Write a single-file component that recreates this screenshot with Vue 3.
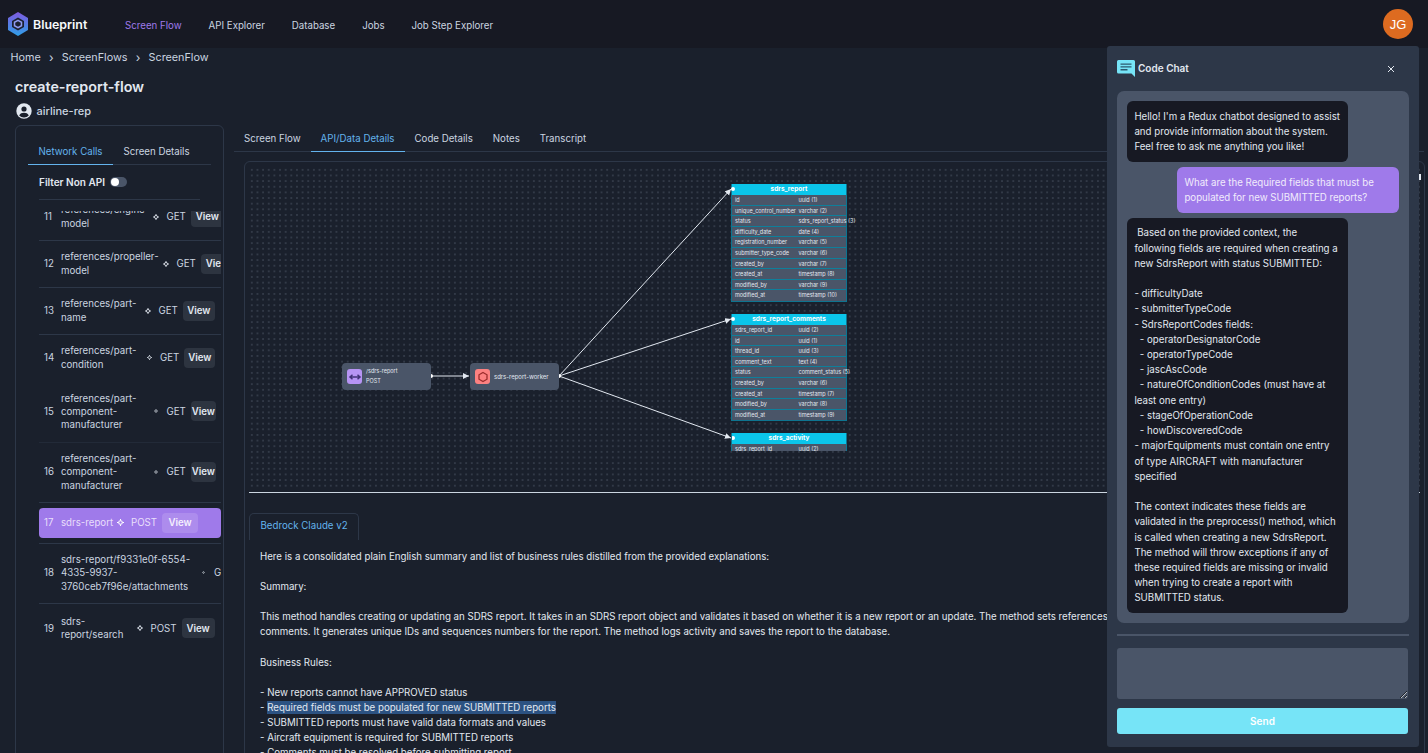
<script setup>
const navItems = ['Screen Flow', 'API Explorer', 'Database', 'Jobs', 'Job Step Explorer']
const mainTabs = ['Screen Flow', 'API/Data Details', 'Code Details', 'Notes', 'Transcript']

const calls = [
  { n: 11, lines: ['references/engine-', 'model'], w: 92, method: 'GET', icon: 6, view: 33, h: 47 },
  { n: 12, lines: ['references/propeller-', 'model'], w: 102, method: 'GET', icon: 6, view: 33, h: 47 },
  { n: 13, lines: ['references/part-', 'name'], w: 84, method: 'GET', icon: 6, view: 32, h: 47 },
  { n: 14, lines: ['references/part-', 'condition'], w: 86, method: 'GET', icon: 5, view: 31, h: 47, sep: 'none' },
  { n: 15, lines: ['references/part-', 'component-', 'manufacturer'], w: 93, method: 'GET', icon: 4, view: 25, h: 61, sep: 'faint' },
  { n: 16, lines: ['references/part-', 'component-', 'manufacturer'], w: 93, method: 'GET', icon: 4, view: 25, h: 60 },
  { n: 17, lines: ['sdrs-report'], w: 56, method: 'POST', icon: 7, view: 36, h: 41, active: true },
  { n: 18, lines: ['sdrs-report/f9331e0f-6554-', '4335-9937-', '3760ceb7f96e/attachments'], w: 141, method: 'GET', icon: 3, view: 25, h: 60 },
  { n: 19, lines: ['sdrs-', 'report/search'], w: 76, method: 'POST', icon: 6, view: 33, h: 49 }
]

const tables = [
  {
    name: 'sdrs_report', cls: 't1',
    rows: [['id', 'uuid (1)'], ['unique_control_number', 'varchar (2)'], ['status', 'sdrs_report_status (3)'], ['difficulty_date', 'date (4)'], ['registration_number', 'varchar (5)'], ['submitter_type_code', 'varchar (6)'], ['created_by', 'varchar (7)'], ['created_at', 'timestamp (8)'], ['modified_by', 'varchar (9)'], ['modified_at', 'timestamp (10)']]
  },
  {
    name: 'sdrs_report_comments', cls: 't2',
    rows: [['sdrs_report_id', 'uuid (2)'], ['id', 'uuid (1)'], ['thread_id', 'uuid (3)'], ['comment_text', 'text (4)'], ['status', 'comment_status (5)'], ['created_by', 'varchar (6)'], ['created_at', 'timestamp (7)'], ['modified_by', 'varchar (8)'], ['modified_at', 'timestamp (9)']]
  },
  {
    name: 'sdrs_activity', cls: 't3',
    rows: [['sdrs_report_id', 'uuid (2)']]
  }
]

const botAnswer = ` Based on the provided context, the following fields are required when creating a new SdrsReport with status SUBMITTED:

- difficultyDate
- submitterTypeCode
- SdrsReportCodes fields:
  - operatorDesignatorCode
  - operatorTypeCode
  - jascAscCode
  - natureOfConditionCodes (must have at least one entry)
  - stageOfOperationCode
  - howDiscoveredCode
- majorEquipments must contain one entry of type AIRCRAFT with manufacturer specified

The context indicates these fields are validated in the preprocess() method, which is called when creating a new SdrsReport. The method will throw exceptions if any of these required fields are missing or invalid when trying to create a report with SUBMITTED status.`
</script>

<template>
  <div class="app">
    <header class="nav">
      <div class="brand">
        <svg class="logo" viewBox="0 0 20 24" width="20" height="24">
          <defs>
            <linearGradient id="lg" x1="0" y1="0" x2="0" y2="1">
              <stop offset="0" stop-color="#7f5ae0" />
              <stop offset="1" stop-color="#2f9fe8" />
            </linearGradient>
          </defs>
          <path d="M10 0 20 6v12L10 24 0 18V6z" fill="url(#lg)" />
          <path d="M10 5.500 16 9v6l-6 3.500L4 15V9z" fill="#1b2030" />
          <path d="M10 8.300 13.500 10.300v3.400L10 15.700 6.500 13.700v-3.400z" fill="none" stroke="#8f9bf0" stroke-width="1.500" />
        </svg>
        <span>Blueprint</span>
      </div>
      <nav class="links">
        <a v-for="(item, i) in navItems" :key="item" :class="{ on: i === 0 }">{{ item }}</a>
      </nav>
      <div class="avatar">JG</div>
    </header>

    <div class="crumbs">
      <span>Home</span><i>›</i><span>ScreenFlows</span><i>›</i><span>ScreenFlow</span>
    </div>

    <h1 class="title">create-report-flow</h1>
    <div class="persona">
      <svg viewBox="0 0 16 16" width="16" height="16">
        <circle cx="8" cy="8" r="7.700" fill="#e2e8f0" />
        <circle cx="8" cy="6" r="2.600" fill="#1a202c" />
        <path d="M3.200 12.600C4 10.500 6 9.800 8 9.800s4 .7 4.800 2.800A6.500 6.500 0 0 1 8 14.500a6.500 6.500 0 0 1-4.800-1.900z" fill="#1a202c" />
      </svg>
      <span>airline-rep</span>
    </div>

    <div class="workspace">
      <aside class="side">
        <div class="side-tabs">
          <span class="side-tab on">Network Calls</span>
          <span class="side-tab">Screen Details</span>
        </div>
        <div class="filter">
          <b>Filter Non API</b>
          <span class="toggle"><em></em></span>
        </div>
        <div class="call-frame">
          <div class="call-list">
            <div v-for="c in calls" :key="c.n" class="call-wrap" :class="[c.sep, { act: c.active }]" :style="{ height: c.h + 'px' }">
              <div class="call">
                <span class="num">{{ c.n }}</span>
                <span class="name" :style="{ width: c.w + 'px' }">
                  <span v-for="l in c.lines" :key="l">{{ l }}</span>
                </span>
                <svg class="mi" viewBox="0 0 10 10" :style="{ width: c.icon + 'px', height: c.icon + 'px' }">
                  <circle cx="5" cy="5" r="2.600" fill="none" stroke="currentColor" stroke-width="1.500" />
                  <path d="M5 0v2M5 8v2M0 5h2M8 5h2" stroke="currentColor" stroke-width="1.500" />
                </svg>
                <span class="method" :style="{ marginLeft: (7 - c.icon) / 2 + 'px' }">{{ c.method }}</span>
                <span class="view" :style="{ width: c.view + 'px' }">View</span>
              </div>
            </div>
          </div>
        </div>
      </aside>

      <main class="main">
        <div class="main-tabs">
          <span v-for="(t, i) in mainTabs" :key="t" class="main-tab" :class="{ on: i === 1 }">{{ t }}</span>
        </div>
        <div class="box">
          <div class="flow">
            <svg class="edges" width="860" height="322" viewBox="0 0 860 322">
              <defs>
                <marker id="ah" markerWidth="7" markerHeight="7" refX="6" refY="3" orient="auto">
                  <path d="M0 0 6 3 0 6z" fill="#e2e8f0" />
                </marker>
              </defs>
              <g stroke="#e2e8f0" stroke-width="1" fill="none">
                <path d="M182 209H220" marker-end="url(#ah)" />
                <path d="M310 209 482 22" marker-end="url(#ah)" />
                <path d="M310 209 482 152" marker-end="url(#ah)" />
                <path d="M310 209 482 271" marker-end="url(#ah)" />
              </g>
              <g fill="#fff">
                <circle cx="182" cy="209" r="2" />
                <circle cx="310" cy="209" r="2" />
              </g>
            </svg>

            <div class="node n1">
              <span class="ni purple">
                <svg viewBox="0 0 14 14" width="14" height="14">
                  <path d="M2 7h10M4.500 4.800 2 7l2.500 2.200M9.500 4.800 12 7l-2.500 2.200" fill="none" stroke="#44337a" stroke-width="1.500" />
                </svg>
              </span>
              <span class="nt"><span>/sdrs-report</span><span>POST</span></span>
            </div>
            <div class="node n2">
              <span class="ni red">
                <svg viewBox="0 0 14 14" width="14" height="14">
                  <path d="M7 2.500 11 4.800v4.400L7 11.500 3 9.200V4.800z" fill="none" stroke="#9b2c2c" stroke-width="1.300" />
                </svg>
              </span>
              <span class="nt"><span class="big">sdrs-report-worker</span></span>
            </div>

            <div v-for="t in tables" :key="t.name" class="dbt" :class="t.cls">
              <div class="dbh">{{ t.name }}</div>
              <div v-for="r in t.rows" :key="r[0]" class="dbr">
                <span>{{ r[0] }}</span><span>{{ r[1] }}</span>
              </div>
              <i class="port"></i>
            </div>
            <i class="mini"></i>
          </div>

          <hr class="rule" />

          <div class="llm-tabs"><span class="llm-tab">Bedrock Claude v2</span></div>
          <div class="summary">
            <p>Here is a consolidated plain English summary and list of business rules distilled from the provided explanations:</p>
            <p class="sp">Summary:</p>
            <p class="sp">This method handles creating or updating an SDRS report. It takes in an SDRS report object and validates it based on whether it is a new report or an update. The method sets references and</p>
            <p>comments. It generates unique IDs and sequences numbers for the report. The method logs activity and saves the report to the database.</p>
            <p class="sp">Business Rules:</p>
            <p class="sp">- New reports cannot have APPROVED status</p>
            <p>- <mark>Required fields must be populated for new SUBMITTED reports</mark></p>
            <p>- SUBMITTED reports must have valid data formats and values</p>
            <p>- Aircraft equipment is required for SUBMITTED reports</p>
            <p>- Comments must be resolved before submitting report</p>
          </div>
        </div>
      </main>
    </div>

    <section class="chat">
      <div class="chat-head">
        <svg viewBox="0 0 18 17" width="18" height="17">
          <path d="M1.500 0h15A1.500 1.500 0 0 1 18 1.500V17l-3.500-3.500h-13A1.500 1.500 0 0 1 0 12V1.500A1.500 1.500 0 0 1 1.500 0z" fill="#76e4f7" />
          <path d="M3.500 3.500h11v1.300h-11zM3.500 6.300h11v1.300h-11zM3.500 9.100h7v1.300h-7z" fill="#2c5a70" />
        </svg>
        <b>Code Chat</b>
        <svg class="x" viewBox="0 0 8 8" width="8" height="8">
          <path d="M1 1l6 6M7 1 1 7" stroke="#e2e8f0" stroke-width="1" />
        </svg>
      </div>
      <div class="msgs">
        <div class="msg bot">Hello! I'm a Redux chatbot designed to assist and provide information about the system. Feel free to ask me anything you like!</div>
        <div class="msg user">What are the Required fields that must be populated for new SUBMITTED reports?</div>
        <div class="msg bot">{{ botAnswer }}</div>
      </div>
      <div class="chat-rule"></div>
      <textarea class="input"></textarea>
      <button class="send">Send</button>
    </section>
  </div>
</template>

<style>
html, body { margin: 0; background: #1a202c; overflow: hidden; }
</style>

<style scoped>
.app {
  position: relative;
  height: 753px;
  overflow: hidden;
  background: #1a202c;
  color: #e2e8f0;
  font-family: Inter, "Liberation Sans", sans-serif;
  font-size: 9.7px;
}
.nav {
  display: flex;
  align-items: center;
  height: 48px;
  background: #171923;
  padding: 0 15px 0 8px;
  box-sizing: border-box;
}
.brand {
  display: flex;
  align-items: center;
  gap: 5px;
  width: 117px;
  font-size: 12.4px;
  font-weight: 600;
  color: #f7fafc;
}
.links { display: flex; gap: 27px; color: #cbd5e0; padding-top: 2px; }
.links .on { color: #9f7aea; }
.avatar {
  margin-left: auto;
  width: 30px;
  height: 30px;
  border-radius: 50%;
  background: #dd6b20;
  color: #fff;
  display: flex;
  align-items: center;
  justify-content: center;
  font: 13px "Liberation Sans", sans-serif;
}
.crumbs {
  display: flex;
  align-items: center;
  height: 18px;
  padding-left: 10.5px;
  font-size: 10.8px;
  color: #cbd5e0;
}
.crumbs i { font-style: normal; width: 21px; text-align: center; font-size: 12px; }
.title {
  margin: 11px 0 0 15px;
  font-size: 14.3px;
  line-height: 20px;
  font-weight: 600;
  color: #e2e8f0;
}
.persona {
  display: flex;
  align-items: center;
  gap: 5px;
  margin: 6px 0 0 15.5px;
  height: 16px;
  font-size: 11px;
  font-weight: 500;
  color: #cbd5e0;
}
.workspace { display: flex; margin-top: 6px; margin-left: 15px; }
.side {
  flex: none;
  width: 209px;
  height: 640px;
  box-sizing: border-box;
  border: 1px solid #2d3748;
  border-radius: 6px;
  padding: 15px 0 0 12px;
}
.side-tabs {
  display: flex;
  width: 183px;
  border-bottom: 1px solid #2d3748;
  height: 23px;
}
.side-tab { padding: 5px 10.5px 0; color: #cbd5e0; height: 24px; box-sizing: border-box; }
.side-tab.on { color: #63b3ed; border-bottom: 1px solid #63b3ed; }
.filter {
  display: flex;
  align-items: center;
  gap: 5px;
  height: 34px;
  margin-left: 11px;
  border-bottom: 1px solid #2d3748;
  width: 161px;
  color: #e2e8f0;
  font-size: 10px;
}
.filter b { font-weight: 600; }
.toggle {
  width: 17px;
  height: 10px;
  border-radius: 5px;
  background: #4a5568;
  display: flex;
  align-items: center;
  padding: 1px;
  box-sizing: border-box;
}
.toggle em { width: 8px; height: 8px; border-radius: 50%; background: #fff; }
.call-frame { height: 560px; margin-top: 11px; margin-left: 11px; width: 182px; overflow: hidden; }
.call-list { margin-top: -17.5px; }
.call-wrap { box-sizing: border-box; border-bottom: 1px solid #2d3748; display: flex; align-items: center; overflow: hidden; }
.call-wrap.none { border-bottom-color: transparent; }
.call-wrap.faint { border-bottom-color: #222a38; }
.call-wrap:last-child { border-bottom: 0; }
.call {
  display: flex;
  align-items: center;
  flex: none;
  width: 182px;
  box-sizing: border-box;
  padding-left: 5px;
  color: #cbd5e0;
  white-space: nowrap;
}
.num { width: 17px; flex: none; }
.name { display: flex; flex-direction: column; line-height: 13.2px; flex: none; }
.mi { flex: none; margin-right: 7px; color: #e2e8f0; }
.method { flex: none; margin-right: 5px; }
.view {
  flex: none;
  height: 20px;
  display: flex;
  align-items: center;
  justify-content: center;
  background: #2d3440;
  border-radius: 4px;
  font-weight: 600;
  color: #e2e8f0;
}
.act .call {
  background: #9f7aea;
  border-radius: 4px;
  height: 30px;
  color: #e9dffb;
}
.act .mi { color: #fff; }
.act .view { background: #ad8ced; color: #f4effd; }
.main { flex: none; width: 1180px; margin-left: 10px; }
.main-tabs {
  display: flex;
  height: 26px;
  border-bottom: 1px solid #2d3748;
  width: 1190px;
}
.main-tab { padding: 8px 10px 0; height: 27px; box-sizing: border-box; color: #cbd5e0; }
.main-tab.on { color: #63b3ed; border-bottom: 1px solid #63b3ed; }
.box {
  margin: 9px 0 0 10px;
  border: 1px solid #2d3748;
  border-radius: 6px;
  height: 620px;
  padding: 5px 4px 0;
  width: 1181px;
  box-sizing: border-box;
}
.flow {
  position: relative;
  height: 322px;
  background-image: radial-gradient(circle, #525c6c 0.55px, transparent 0.75px);
  background-size: 5.65px 5.65px;
}
.edges { position: absolute; left: 0; top: 0; }
.mini { position: absolute; left: 1170px; top: 7px; width: 2px; height: 6px; background: #e2e8f0; }
.node {
  position: absolute;
  width: 89px;
  height: 27px;
  background: #4a5568;
  border-radius: 4px;
  display: flex;
  align-items: center;
  gap: 4px;
  padding-left: 5px;
  box-sizing: border-box;
}
.n1 { left: 93px; top: 196px; }
.n2 { left: 221px; top: 196px; }
.ni { width: 15px; height: 15px; border-radius: 3px; display: flex; align-items: center; justify-content: center; flex: none; }
.purple { background: #b794f4; }
.red { background: #fc8181; }
.nt { display: flex; flex-direction: column; gap: 3px; font-size: 5.5px; line-height: 7px; color: #e2e8f0; }
.nt .big { font-size: 6px; }
.dbt {
  position: absolute;
  left: 482px;
  width: 116px;
  box-sizing: border-box;
  border: 1px solid #0e7490;
  border-top: 0;
  background: #4a5568;
  font-size: 5.5px;
  color: #e2e8f0;
  white-space: nowrap;
}
.t1 { top: 17px; }
.t2 { top: 147px; }
.t3 { top: 266px; height: 18px; overflow: hidden; border-bottom: 0; }
.port {
  position: absolute;
  left: -1px;
  top: 3px;
  width: 4px;
  height: 4px;
  border-radius: 50%;
  background: #fff;
}
.dbh {
  height: 11px;
  line-height: 11px;
  background: #0bc5ea;
  color: #fff;
  font-weight: 700;
  font-size: 6.5px;
  text-align: center;
}
.dbr {
  display: flex;
  height: 10.6px;
  line-height: 10px;
  box-sizing: border-box;
  border-bottom: 1px solid #0e7f9b;
  padding-left: 3px;
}
.dbr:nth-last-child(2) { border-bottom: 0; }
.dbr span:first-child { width: 63.5px; flex: none; }
.rule { border: 0; height: 1px; background: #cbd5e0; margin: 3px 0 0 0; }
.llm-tabs { margin-top: 20px; height: 27px; }
.llm-tab {
  display: inline-block;
  height: 27px;
  box-sizing: border-box;
  padding: 6px 10.5px 0;
  border: 1px solid #2d3748;
  border-bottom: 0;
  border-radius: 5px 5px 0 0;
  color: #63b3ed;
}
.summary { padding: 9px 0 0 11px; line-height: 15.08px; color: #e2e8f0; white-space: nowrap; }
.summary p { margin: 0; }
.summary .sp { margin-top: 15.08px; }
mark { background: #2c5282; color: #e2e8f0; padding: 1px 0; }
.chat {
  position: absolute;
  left: 1107px;
  top: 46px;
  width: 312px;
  height: 701px;
  box-sizing: border-box;
  background: #2d3748;
  border-radius: 3px;
  padding: 0 10px;
  display: flex;
  flex-direction: column;
}
.chat-head {
  display: flex;
  align-items: center;
  gap: 3px;
  height: 45px;
  flex: none;
  color: #e2e8f0;
  font-size: 10px;
}
.chat-head b { font-weight: 600; margin-top: -1px; }
.x { margin-left: auto; margin-right: 14px; }
.msgs {
  height: 532px;
  flex: none;
  box-sizing: border-box;
  background: #4a5568;
  border-radius: 7px;
  padding: 10px;
  display: flex;
  flex-direction: column;
  gap: 5px;
}
.msg {
  width: 221px;
  box-sizing: border-box;
  padding: 7.7px 7.4px;
  border-radius: 6px;
  line-height: 15.2px;
  white-space: pre-wrap;
}
.bot { background: #171923; color: #e2e8f0; }
.user { background: #9f7aea; color: #f1ebfc; align-self: flex-end; width: 222px; }
.chat-rule { height: 2px; background: #4a5568; margin-top: 11px; flex: none; }
.input {
  display: block;
  margin-top: 12px;
  height: 51px;
  width: 291px;
  box-sizing: border-box;
  background: #4a5568;
  border: 0;
  border-radius: 3px;
  resize: vertical;
  flex: none;
  outline: none;
}
.send {
  margin-top: 9px;
  width: 291px;
  height: 26px;
  flex: none;
  border: 0;
  border-radius: 3px;
  background: #76e4f7;
  color: #fff;
  font: 600 10px Inter, "Liberation Sans", sans-serif;
}
</style>
